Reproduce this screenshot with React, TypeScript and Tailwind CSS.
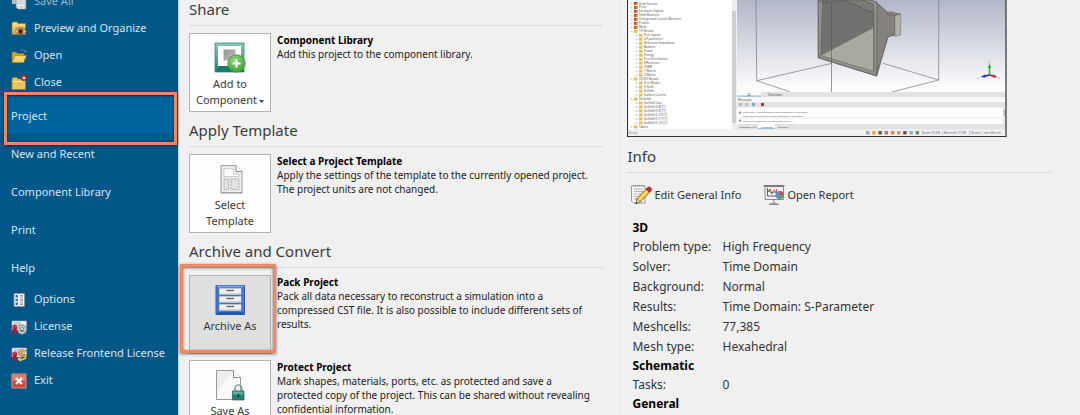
import type { ReactNode } from "react";

const uiFont = "font-['Noto_Sans',sans-serif]";

/* ---------- sidebar icons ---------- */

const SaveAllIcon = () => (
  <svg viewBox="0 0 16 16" className="size-4">
    <path d="M1 1h10v9H1z" fill="#b9c0c6" />
    <path d="M5 5h10v10H7l-2-2z" fill="#d5d8da" stroke="#8b959c" strokeWidth=".6" />
    <path d="M7.500 11h5v4h-5z" fill="#fff" />
    <path d="M8 12.500h4M8 14h4" stroke="#8b959c" strokeWidth=".6" />
  </svg>
);

const FolderDefs = () => (
  <defs>
    <linearGradient id="folder" x1="0" y1="0" x2="0" y2="1">
      <stop offset="0" stopColor="#fbe294" />
      <stop offset="1" stopColor="#dba52f" />
    </linearGradient>
  </defs>
);

const PreviewIcon = () => (
  <svg viewBox="0 0 16 16" className="size-4">
    <FolderDefs />
    <path d="M1 2.500 2 1h4l1 1.500h7.500v11H1z" fill="url(#folder)" stroke="#a57a2c" strokeWidth=".6" />
    <path d="M4 10.500Q9.500 5 15.500 10.500 9.500 15.500 4 10.500z" fill="#e8cfae" stroke="#8a5a30" strokeWidth=".6" />
    <circle cx="9.600" cy="10.500" r="2.700" fill="#7c4a25" />
    <circle cx="9.600" cy="10.500" r="1.200" fill="#24120a" />
    <path d="M4 8.500Q9.500 4.500 15 8.500" fill="none" stroke="#8a5a30" strokeWidth=".8" />
  </svg>
);

const OpenIcon = () => (
  <svg viewBox="0 0 16 16" className="size-4">
    <path d="M1 4h4l1 1.500h7V14H1z" fill="#d9a738" stroke="#8f6a1d" strokeWidth=".6" />
    <path d="M4 7.500h11.500L12.500 14.500H1z" fill="#f8d671" stroke="#a97d25" strokeWidth=".7" />
    <path d="M9 2.500Q12 0 14.500 3.500" fill="none" stroke="#4f7fa6" strokeWidth="1" />
    <path d="m15.500 2-.5 3-2.500-1.500z" fill="#4f7fa6" />
  </svg>
);

const CloseIcon = () => (
  <svg viewBox="0 0 16 16" className="size-4">
    <path d="M1 4 2 2.500h4L7 4h7.500v10.500H1z" fill="#eac35c" stroke="#a57a2c" strokeWidth=".7" />
    <path d="M1.500 6.500h12.500" stroke="#fbe8a8" strokeWidth="1" />
    <circle cx="13" cy="3" r="2.900" fill="#c23b45" stroke="#8d2733" strokeWidth=".5" />
    <path d="m12 2 2 2m0-2-2 2" stroke="#fff" strokeWidth=".9" />
  </svg>
);

const OptionsIcon = () => (
  <svg viewBox="0 0 16 16" className="size-4">
    <path d="M3 1.500h10.500v13H3z" fill="#f4f5fa" stroke="#8a8f99" strokeWidth=".8" />
    <path d="M4.500 3h2.500v2.500H4.500zM4.500 6.800h2.500v2.500H4.500zM4.500 10.600h2.500v2.500H4.500z" fill="#4c65c4" />
    <path d="M9 3.500h3M9 5h3M9 7.200h3M9 8.700h3M9 11h3M9 12.500h3" stroke="#777d88" strokeWidth=".8" />
  </svg>
);

const CertificateBase = () => (
  <>
    <path d="M1 2h14.500v9H1z" fill="#eef0f6" stroke="#a5abb8" strokeWidth=".6" />
    <path d="M3 4h7M3 6h9" stroke="#969fb8" strokeWidth=".9" />
    <circle cx="3.700" cy="8" r="2.500" fill="#cc2f3c" />
    <path d="M2 9h3.500l.5 6-2.300-1.500L.8 15z" fill="#a81d2b" />
  </>
);

const LicenseIcon = () => (
  <svg viewBox="0 0 16 16" className="size-4">
    <CertificateBase />
    <circle cx="11" cy="10.500" r="3.200" fill="none" stroke="#70777d" strokeWidth="3.400" />
    <circle cx="11" cy="10.500" r="3.200" fill="none" stroke="#c4c9cc" strokeWidth="2" />
    <path d="M11 5.500v2m0 6v2m-5-5h2m6 0h2m-8.500-3.500 1.400 1.400m4.200 4.200 1.400 1.400m0-7-1.400 1.400m-4.200 4.200-1.400 1.400" stroke="#b3b8bb" strokeWidth="1.200" />
  </svg>
);

const ReleaseIcon = () => (
  <svg viewBox="0 0 16 16" className="size-4">
    <CertificateBase />
    <path d="M14.500 5.500Q10 3.500 9 6t2.500 3 3 2.500T8 14" fill="none" stroke="#7d5a18" strokeWidth="2.800" />
    <path d="M14.500 5.500Q10 3.500 9 6t2.500 3 3 2.500T8 14" fill="none" stroke="#e8bd59" strokeWidth="1.700" />
    <path d="m10 11-4 2 3.500 2.500z" fill="#e8bd59" />
  </svg>
);

const ExitIcon = () => (
  <svg viewBox="0 0 16 16" className="size-4">
    <path d="M1 1h14v14H1z" fill="#cf4737" stroke="#eea091" strokeWidth=".9" />
    <path d="M1.500 1.500h13V8h-13z" fill="#e27c6b" />
    <path d="m5 5 6 6m0-6-6 6" stroke="#fff" strokeWidth="2.200" />
  </svg>
);

/* ---------- card icons ---------- */

const ComponentIcon = () => (
  <svg viewBox="0 0 32 32" className="size-8">
    <defs>
      <linearGradient id="frame" x1="0" y1="0" x2="0" y2="1">
        <stop offset="0" stopColor="#8fc7bb" />
        <stop offset="1" stopColor="#1d8377" />
      </linearGradient>
      <linearGradient id="cube" x1="0" y1="0" x2="1" y2="1">
        <stop offset="0" stopColor="#8f8f8f" />
        <stop offset="1" stopColor="#c4c4c4" />
      </linearGradient>
      <radialGradient id="plus" cx=".4" cy=".3" r=".8">
        <stop offset="0" stopColor="#8fd874" />
        <stop offset="1" stopColor="#379b31" />
      </radialGradient>
    </defs>
    <path d="M1 1h29v29H1z" fill="url(#frame)" stroke="#348f82" strokeWidth=".8" />
    <path d="M4 4h23v20H4z" fill="#fff" />
    <path d="m1 30 4-6h22l3 6z" fill="#197b70" />
    <path d="M9.500 7.500h12v11h-12z" fill="url(#cube)" />
    <circle cx="22.500" cy="21.500" r="8.700" fill="url(#plus)" stroke="#3d9938" strokeWidth=".8" />
    <path d="M22.500 17.500v8m-4-4h8" stroke="#fff" strokeWidth="2.200" />
  </svg>
);

const TemplateIcon = () => (
  <svg viewBox="0 0 32 32" className="size-8">
    <path d="M7 2.500h15l6 6V29.500H7z" fill="#ececec" stroke="#959595" strokeWidth=".9" />
    <path d="M22 2.500v6h6" fill="#fff" stroke="#858585" strokeWidth=".9" />
    <path d="M10 5.500h9.500v5.500H25v2.500H10z" fill="#fbfbfb" stroke="#bdbdbd" strokeWidth=".7" />
    <path d="M10 16h4.500v10.500H10zM17 16h8v10.500h-8z" fill="#e2e2e2" stroke="#999" strokeWidth=".8" strokeDasharray="2 1" />
    <path d="M6 30.500h22.500" stroke="#b8b8b8" strokeWidth=".8" />
  </svg>
);

const ArchiveIcon = () => (
  <svg viewBox="0 0 32 32" className="size-8">
    <path d="M2 1.500h28.500v29H2z" fill="#4779d4" stroke="#2e57a8" />
    <path d="M2 1.500h28.500l-2.500 2H4.500z" fill="#82a7e8" />
    <path d="M2 30.500h28.500l-3-2.500h-23z" fill="#2455ad" />
    {[4, 12, 20].map((y) => (
      <g key={y}>
        <path d={`M5 ${y}h22.500v6.800H5z`} fill="#f0f0f0" stroke="#536a96" strokeWidth=".6" />
        <path d={`M5.500 ${y + 6}h21.500`} stroke="#c6c6c6" />
        <path d={`M12.500 ${y + 2.5}h7.500`} stroke="#5e5e5e" strokeWidth="1.300" />
      </g>
    ))}
  </svg>
);

const ProtectIcon = () => (
  <svg viewBox="0 0 32 32" className="size-8">
    <path d="M2.500 1.500h17l7 7V30.500h-24z" fill="#eee" stroke="#9a9a9a" />
    <path d="M3.500 22 20 2l6 6.500V15L14 29.500H3.500z" fill="#fff" opacity=".7" />
    <path d="M19.500 1.500v7h7" fill="#fff" stroke="#8c8c8c" />
    <path d="M21 23v-3.500a3.500 3.500 0 0 1 7 0V23" fill="none" stroke="#8aa69f" strokeWidth="1.700" />
    <path d="M18.500 22h11.500v9H18.500z" fill="#278373" stroke="#16604f" strokeWidth=".7" />
    <path d="M19 22.500h10.500v3H19z" fill="#60ab9e" />
    <path d="M24.300 25v3.500" stroke="#0b3c33" strokeWidth="1.700" />
  </svg>
);

/* ---------- info icons ---------- */

const EditIcon = () => (
  <svg viewBox="0 0 22 24" className="h-6 w-[22px] shrink-0">
    <path d="M1.500 3h13.500v17H3.500l-2-2z" fill="#f7f7f7" stroke="#858585" strokeWidth=".8" />
    <path d="M3 2.500h11" stroke="#777" strokeDasharray="1 1" />
    <path d="M4 6h9M4 8.500h9M4 11h7M4 13.500h5M4 16h3" stroke="#a9a9a9" strokeWidth=".9" />
    <path d="m6 20.500 1-5L16 6l3.500 3.500-9 9.500z" fill="#efbf3c" stroke="#8a6218" strokeWidth=".8" />
    <path d="m8.500 17.500 9-9.500" stroke="#fae58a" strokeWidth="1.200" />
    <path d="m16 6 1.500-1.500q2-1.500 3.500.5t-.5 3.500l-1 1z" fill="#c52f32" stroke="#85242a" strokeWidth=".5" />
    <path d="m6 20.500 1-5 3.500 3.500z" fill="#e9d5aa" stroke="#555" strokeWidth=".6" />
    <path d="m5.500 21 .5-2 1.500 1.500z" fill="#222" />
  </svg>
);

const ReportIcon = () => (
  <svg viewBox="0 0 22 24" className="h-6 w-[22px] shrink-0">
    <path d="M2 3.500h18.500v13H2z" fill="#f2f2f2" stroke="#8a8a8a" />
    <path d="M.5 2.800h21" stroke="#666" strokeWidth="1.300" />
    <path d="M4.500 5v8h9" fill="none" stroke="#4d4d4d" strokeWidth=".9" />
    <path d="m5 9 2-3 2 5 2-4 2 3 1-4" fill="none" stroke="#ce3e48" strokeWidth="1" />
    <path d="m5 7 3 3 3-1 4 1" fill="none" stroke="#4d9b55" strokeWidth=".9" />
    <circle cx="16.500" cy="12" r="4" fill="#5f8ed0" />
    <path d="M16.500 12V8a4 4 0 0 1 4 4z" fill="#d94b3c" />
    <path d="M16.500 12h4a4 4 0 0 1-5 3.900z" fill="#5aa552" />
    <path d="M11 17v3M6 21.500q5-3 10 0z" fill="#ddd" stroke="#888" strokeWidth="1" />
  </svg>
);

/* ---------- project preview ---------- */

type TreeRow = [label: string, level: 0 | 1, red?: boolean];

const tree: TreeRow[] = [
  ["Field Sources", 0, true],
  ["Ports", 0, true],
  ["Excitation Signals", 0, true],
  ["Field Monitors", 0, true],
  ["Voltage and Current Monitors", 0, true],
  ["Probes", 0, true],
  ["Mesh", 0, true],
  ["1D Results", 0],
  ["Port signals", 1],
  ["S-Parameters", 1],
  ["Reference Impedance", 1],
  ["Balance", 1],
  ["Power", 1],
  ["Energy", 1],
  ["Port Information", 1],
  ["Efficiencies", 1],
  ["VSWR", 1],
  ["Y Matrix", 1],
  ["Z Matrix", 1],
  ["2D/3D Results", 0],
  ["Port Modes", 1],
  ["E-Field", 1],
  ["H-Field", 1],
  ["Surface Current", 1],
  ["Farfields", 0],
  ["Farfield Cuts", 1],
  ["farfield (f=8) [1]", 1],
  ["farfield (f=9) [1]", 1],
  ["farfield (f=10) [1]", 1],
  ["farfield (f=11) [1]", 1],
  ["farfield (f=12) [1]", 1],
  ["Tables", 0],
];

const statusColors = ["#a9a9a9", "#e5a94d", "#705c49", "#b27d68", "#d98a45", "#c7a28b", "#7c4a3e", "#a4a9ad", "#5b9b58"];

const ProjectPreview = () => (
  <svg
    viewBox="0 0 380 138"
    role="img"
    aria-label="Project preview"
    className="block w-[380px] max-w-full font-['Noto_Sans',sans-serif]"
    fill="#555"
    fontSize="3"
  >
    <defs>
      <linearGradient id="sky" x1="0" y1="0" x2="0" y2="1">
        <stop offset="0" stopColor="#b1b6c8" />
        <stop offset=".95" stopColor="#fcfcfd" />
      </linearGradient>
    </defs>
    <path d="M0 0h380v137H0z" fill="#f0f0f0" />
    <path d="M1 0h106v129H1z" fill="#fff" />
    <path d="M105 0h4v129h-4z" fill="#ededed" />
    <path d="M105 11h4v112h-4z" fill="#cdcdcd" />
    {tree.map(([label, level, red], i) => {
      const x = 5 + level * 5;
      const y = 4.5 + i * 3.98;
      return (
        <g key={label}>
          <path d={`M${x - 1.5} ${y - 2}h2v2h-2z`} fill="#d3d5da" />
          <path d={`M${x + 2} ${y - 2.5}h3.500v3H${x + 2}z`} fill={red ? "#cf4436" : "#eabf4c"} />
          {red && <path d={`M${x + 4} ${y - 1.5}h2v2h-2z`} fill="#e3a643" />}
          <text x={x + 7} y={y}>{label}</text>
        </g>
      );
    })}

    <path d="M110 0h269v92H110z" fill="url(#sky)" />
    <g fill="none" stroke="#777a7e" strokeWidth=".7">
      <path d="M129 0l.7 80.700 33 11M129.700 80.700 205 63.300M311.700 0v80l-47 12M311.700 80 256 63.300" />
    </g>
    <path d="m249 2 12 11v2.500l7-1.200V35l-7 1.800L249.700 76 191.300 57.700V0h51.500z" fill="#85817c" stroke="#55544f" strokeWidth=".8" />
    <path d="M191.300 0v57.700L249.700 76 250 2.500 243 0z" fill="#92918b" stroke="#5b5a56" strokeWidth=".7" />
    <path d="M195.500 0 194 55l53 16V13L217 0z" fill="#73716f" stroke="#55544f" strokeWidth=".5" />
    <path d="M193.500 55.500 246.500 27.500V71.500z" fill="#a9aa9f" stroke="#66665f" strokeWidth=".6" />
    <path d="m217 0 29.500 13V4.500L236 0z" fill="#7d7b78" stroke="#5a5955" strokeWidth=".7" />
    <path d="m261 12 7 3-7 1z" fill="#77746f" />
    <path d="m268 15.500 5.700-1.500v21l-5.700 1.500z" fill="#b2b0ab" stroke="#777" strokeWidth=".6" />
    <path d="M262 11.500 273.500 14l-5.500 1.500z" fill="#8b8883" stroke="#66645f" strokeWidth=".6" />
    <path d="M204.500 2.500V92M192 1.500l12.500 1L217 0" fill="none" stroke="#55544f" strokeWidth=".6" />

    <path d="M362.500 75V66" stroke="#25b52c" strokeWidth="1.400" />
    <path d="m362.500 63.500 1.800 4.500h-3.600z" fill="#25b52c" />
    <path d="m362.500 75-5 1.200" stroke="#2727ad" strokeWidth="1.400" />
    <path d="m353.500 77 4.500-2.500.5 3z" fill="#1f23cc" />
    <path d="m362.500 75 5 1.500" stroke="#8e2425" strokeWidth="1.400" />
    <path d="m370.500 77.300-4.500.2.500-3z" fill="#c62122" />
    <text x="361.500" y="62.500" fill="#32c439">y</text>
    <text x="350.500" y="78.500" fill="#4b4bf0">z</text>
    <text x="371" y="79" fill="#ee4848">x</text>

    <path d="M110 92h269v5H110z" fill="#e2e2e2" />
    <path d="M110 92h24v4h-24z" fill="#fff" />
    <path d="M110 96h24" stroke="#68a4cb" strokeWidth=".8" />
    <text x="120" y="95.500">3D</text>
    <text x="141" y="95.500">Schematic</text>
    <path d="M110 97h269v5H110z" fill="#f9f9f9" />
    <text x="111" y="100.500">Messages</text>
    <path d="M110 102h269v5H110z" fill="#e4e4e4" />
    <path d="M112 103h3v3h-3zM118 103h3v3h-3z" fill="#b9bcc0" />
    <path d="M125 103h3v3h-3z" fill="#7fa8d2" />
    <path d="M134 103h3v3h-3z" fill="#9a3f37" />
    <path d="M110 107h266v17H110z" fill="#fff" />
    <path d="M110 107.300h266M110 118h266" stroke="#d6d6d6" strokeWidth=".5" />
    <path d="M376 107h3v17h-3z" fill="#e6e6e6" />
    <path d="M376.500 110h2v6h-2z" fill="#bbb" />
    <circle cx="113" cy="112.500" r="1.100" fill="#5a8ed2" />
    <circle cx="113" cy="120.700" r="1.100" fill="#5a8ed2" />
    <text x="116" y="113.200" fontSize="2.500">The S and Y matrices have been successfully calculated</text>
    <text x="116" y="116.600" fontSize="2.500">The VSWR results have been successfully calculated</text>
    <text x="116" y="121.800" fontSize="2.500">Creating parametric 1D results for Run ID 1</text>
    <path d="M110 124h269v5.500H110z" fill="#e2e2e2" />
    <path d="M131 124h17v4.500h-17z" fill="#fff" />
    <path d="M131 128.700h17" stroke="#68a4cb" strokeWidth=".8" />
    <text x="112" y="127.500" fontSize="2.500">Parameter List</text>
    <text x="134" y="127.500" fontSize="2.500">Messages</text>
    <text x="150.500" y="127.500" fontSize="2.500">Progress</text>

    <path d="M1 129.500h378v7H1z" fill="#f1f1f1" />
    <text x="2" y="134" fill="#888">Ready</text>
    {statusColors.map((color, i) => (
      <path key={color} d={`M${239 + i * 6.2} 131h3.500v3.500h-3.500z`} fill={color} />
    ))}
    <g fill="#56657f" fontSize="2.700">
      <text x="295" y="134">Raster=10.000</text>
      <text x="317" y="134">Meshcells=77,385</text>
      <text x="344" y="134">Normal</text>
      <text x="357" y="134">mm GHz ns K</text>
    </g>
    <path d="M315.500 131v4M342.500 131v4M355.500 131v4" stroke="#9da9bd" strokeWidth=".5" />
    <path d="M.5 0v136.500h378.500V0" fill="none" stroke="#333" strokeWidth="1.200" />
  </svg>
);

/* ---------- page parts ---------- */

const commandClass = "flex h-[27px] w-full items-center gap-[7px] pl-[11px] text-left whitespace-nowrap";

const Command = ({ icon, children, muted }: { icon: ReactNode; children: ReactNode; muted?: boolean }) => (
  <button type="button" className={muted ? `${commandClass} text-[#9dbacd]` : commandClass}>
    {icon}
    <span>{children}</span>
  </button>
);

const Tab = ({ children, selected }: { children: ReactNode; selected?: boolean }) => (
  <button
    type="button"
    className={
      selected
        ? "relative flex h-[38px] w-full items-center bg-[#00639d] pt-[2px] pl-[11px]"
        : "flex h-[38px] w-full items-center pt-[2px] pl-[11px]"
    }
  >
    {children}
    {selected && (
      <span className="absolute -top-1 right-[1px] -bottom-[11px] left-1 border-3 border-[#f5865f] shadow-[0_1px_3px_#00000088,inset_0_1px_3px_#00000088]" />
    )}
  </button>
);

const Heading = ({ children }: { children: ReactNode }) => (
  <h2 className="flex h-[26px] items-start border-b border-[#d9d9d9] text-[15px] leading-[18px] text-[#3b3b3b]">
    {children}
  </h2>
);

const Section = ({ title, children }: { title: string; children: ReactNode }) => (
  <section className="pb-[9px]">
    <Heading>{title}</Heading>
    <div className="flex flex-col gap-[6px] pt-[7px]">{children}</div>
  </section>
);

type ActionProps = { icon: ReactNode; label: ReactNode; title: string; children: ReactNode; selected?: boolean };

const Action = ({ icon, label, title, children, selected }: ActionProps) => (
  <div className="flex gap-[6px]">
    <button
      type="button"
      className={
        selected
          ? "relative flex h-[79px] w-[82px] shrink-0 flex-col items-center border border-[#b4b4b4] bg-[#dfdfdf] pt-2 text-[11px] leading-4"
          : "flex h-[79px] w-[82px] shrink-0 flex-col items-center border border-[#b4b4b4] bg-[#fdfdfd] pt-2 text-[11px] leading-4"
      }
    >
      {icon}
      <span className="pt-[2px] text-[#3a3a3a]">{label}</span>
      {selected && (
        <span className="absolute -top-3 -right-[6px] bottom-0 -left-[10px] border-3 border-[#f5865f] shadow-[0_1px_3px_#00000088,inset_0_1px_3px_#00000088]" />
      )}
    </button>
    <div className="text-[10px] leading-[14px] whitespace-nowrap text-[#222]">
      <h3 className="font-bold text-black">{title}</h3>
      <p>{children}</p>
    </div>
  </div>
);

const groups: { name: string; rows: [string, string][] }[] = [
  {
    name: "3D",
    rows: [
      ["Problem type:", "High Frequency"],
      ["Solver:", "Time Domain"],
      ["Background:", "Normal"],
      ["Results:", "Time Domain: S-Parameter"],
      ["Meshcells:", "77,385"],
      ["Mesh type:", "Hexahedral"],
    ],
  },
  { name: "Schematic", rows: [["Tasks:", "0"]] },
  { name: "General", rows: [] },
];

export default function App() {
  return (
    <div className={`${uiFont} flex h-screen overflow-hidden bg-[#f0f0f0] text-[#333]`}>
      <nav className="w-[179px] shrink-0 border-r border-[#c5d3dc] bg-[#005788] text-[11px] text-[#d6e6f0]">
        <div className="-mt-3">
          <Command icon={<SaveAllIcon />} muted>Save All</Command>
          <Command icon={<PreviewIcon />}>Preview and Organize</Command>
          <Command icon={<OpenIcon />}>Open</Command>
          <Command icon={<CloseIcon />}>Close</Command>
          <Tab selected>Project</Tab>
          <Tab>New and Recent</Tab>
          <Tab>Component Library</Tab>
          <Tab>Print</Tab>
          <Tab>Help</Tab>
          <Command icon={<OptionsIcon />}>Options</Command>
          <Command icon={<LicenseIcon />}>License</Command>
          <Command icon={<ReleaseIcon />}>Release Frontend License</Command>
          <Command icon={<ExitIcon />}>Exit</Command>
        </div>
      </nav>

      <div className="grid min-w-0 flex-1 grid-cols-[49fr_51fr]">
        <main className="min-w-0 border-r border-[#e6e6e6] pr-4 pl-[10px]">
          <Section title="Share">
            <Action
              icon={<ComponentIcon />}
              label={
                <>
                  Add to
                  <br />
                  Component
                  <svg viewBox="0 0 5 3" className="ml-[2px] inline-block h-[3px] w-[5px] align-middle">
                    <path d="M0 0h5L2.500 3z" fill="#2b4a75" />
                  </svg>
                </>
              }
              title="Component Library"
            >
              Add this project to the component library.
            </Action>
          </Section>
          <Section title="Apply Template">
            <Action
              icon={<TemplateIcon />}
              label={
                <>
                  Select
                  <br />
                  Template
                </>
              }
              title="Select a Project Template"
            >
              Apply the settings of the template to the currently opened project.
              <br />
              The project units are not changed.
            </Action>
          </Section>
          <Section title="Archive and Convert">
            <Action icon={<ArchiveIcon />} label="Archive As" title="Pack Project" selected>
              Pack all data necessary to reconstruct a simulation into a
              <br />
              compressed CST file. It is also possible to include different sets of
              <br />
              results.
            </Action>
            <Action icon={<ProtectIcon />} label="Save As" title="Protect Project">
              Mark shapes, materials, ports, etc. as protected and save a
              <br />
              protected copy of the project. This can be shared without revealing
              <br />
              confidential information.
            </Action>
          </Section>
        </main>

        <aside className="min-w-0 pr-[29px] pl-[7px]">
          <ProjectPreview />
          <div className="pt-[9px]">
            <Heading>Info</Heading>
          </div>
          <div className="flex gap-[22px] pt-[10px] pl-[3px] text-[11px]">
            <button type="button" className="flex items-center gap-[2px]">
              <EditIcon />
              Edit General Info
            </button>
            <button type="button" className="flex items-center gap-[2px]">
              <ReportIcon />
              Open Report
            </button>
          </div>
          <table className="mt-3 ml-[5px] text-left text-[12px]">
            {groups.map((group) => (
              <tbody key={group.name}>
                <tr>
                  <th colSpan={2} scope="rowgroup" className="p-0 leading-[18px] font-bold text-black">
                    {group.name}
                  </th>
                </tr>
                {group.rows.map(([label, value]) => (
                  <tr key={label}>
                    <th scope="row" className="w-[90px] p-0 leading-5 font-normal">{label}</th>
                    <td className="p-0 leading-5">{value}</td>
                  </tr>
                ))}
              </tbody>
            ))}
          </table>
        </aside>
      </div>
    </div>
  );
}
